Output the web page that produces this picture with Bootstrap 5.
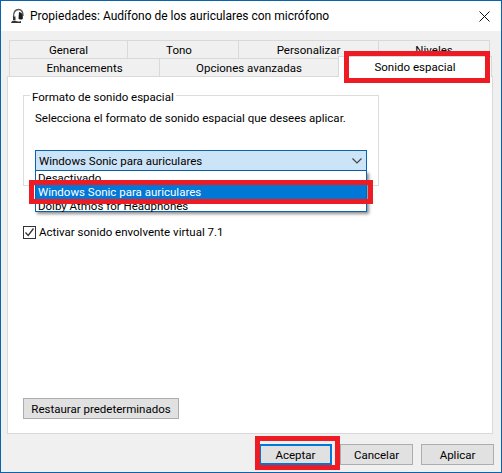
<!DOCTYPE html>
<html lang="es">
<head>
<meta charset="UTF-8">
<title>Propiedades</title>
<link href="https://cdn.jsdelivr.net/npm/bootstrap@5.3.0/dist/css/bootstrap.min.css" rel="stylesheet">
<style>
html, body { width: 502px; height: 473px; overflow: hidden; }
body { font-family: Roboto, "Liberation Sans", sans-serif; font-size: 11.5px; line-height: 16px; color: #000; background: #f0f0f0; }
.dlg { width: 502px; height: 473px; border: 1px solid #0a63ad; background: #f0f0f0; position: relative; }
.dlg-title { height: 30px; background: #fff; padding-left: 9px; font-size: 12px; }
.dlg-title svg { margin-right: 4px; flex: none; }
.dlg-close { margin-left: auto; margin-right: 11px !important; }
.tabs { margin: 9px 9px 0 8px; }
.tab-line { height: 18px; }
.tab-item { border: 1px solid #d9d9d9; border-bottom: 0; border-left-width: 0; background: #f0f0f0; text-align: center; line-height: 19px; }
.tab-item:first-child { border-left-width: 1px; }
.w-118 { width: 119px; } .w-111 { width: 111px; padding-right: 8px; } .w-140 { width: 140px; } .w-113 { width: 111px; }
.w-150 { width: 151px; } .w-179 { width: 179px; } .w-154 { width: 154px; }
.tab-on { background: #fff; height: 21px; margin-top: -2px; margin-bottom: -1px; position: relative; z-index: 1; line-height: 20px; border-left-width: 1px; margin-left: -1px; }
.pane { margin-left: 6px; width: 486px; height: 358px; background: #fff; border: 1px solid #d9d9d9; padding: 18px 15px 14px 15px; }
.grp { width: 356px; height: 91px; border: 1px solid #dcdcdc; padding: 14px 11px 0 11px; position: relative; }
.grp-name { position: absolute; left: 6px; top: -7px; background: #fff; padding: 0 2px; }
.sentence { margin-bottom: 24px; white-space: nowrap; }
.combo { height: 21px; border: 1px solid #0a63ad; background: #cce4f7; padding-left: 3px; }
.combo svg { margin-left: auto; margin-right: 4px; }
.combo-list { position: absolute; left: 11px; top: 75px; width: 332px; height: 41px; border: 1px solid #0a63ad; border-top: 0; background: #fff; box-shadow: 2px 2px 3px rgba(0,0,0,.45); z-index: 2; }
.combo-opt { height: 14px; line-height: 14px; padding-left: 2px; }
.combo-sel { background: #0078d7; color: #fff; }
.opt-row { margin-top: 38px; height: 16px; }
.opt-box { width: 13px; height: 13px; border: 1px solid #333; margin-right: 3px; background: #fff; flex: none; }
.opt-box svg { display: block; }
.win-btn { background: #e1e1e1; border: 1px solid #adadad; border-radius: 0; font-size: 11.5px; line-height: 16px; color: #000; padding: 1px 0; height: 21px; white-space: nowrap; }
.win-btn:hover { background: #e1e1e1; border-color: #adadad; color: #000; }
.btn-reset { width: 156px; margin-top: 158px; display: block; }
.foot { margin: 10px 7px 0 0; }
.foot .win-btn { width: 73px; margin-left: 8px; }
.foot .win-btn.btn-def { border: 2px solid #0078d7; padding: 0; }
.mark-red { position: absolute; border: 5px solid #ed1c24; z-index: 5; pointer-events: none; }
.mark-tab { left: 343px; top: 50px; width: 146px; height: 32px; }
.mark-opt { left: 28px; top: 179px; width: 344px; height: 24px; }
.mark-ok { left: 254px; top: 435px; width: 85px; height: 34px; }
</style>
</head>
<body>
<div class="dlg">
  <div class="dlg-title d-flex align-items-center">
    <svg width="16" height="16" viewBox="0 0 16 16"><path d="M3.500 9C3.500 4 5.500 1.500 8.500 1.500S13 4 13 8" fill="none" stroke="#555" stroke-width="1.300"/><path d="M9 4c2.500.2 3.800 2 3.800 4.500v2.500c-2 1-3.600.5-4.300-.5z" fill="#1c1c1c"/><path d="M3 8.500h2.500v3.500H3z" fill="#333"/><path d="M1 15c.6-2.400 3-3 4.500-2.200s3.300 1 5.500.2v2z" fill="#333"/></svg>
    <span>Propiedades: Audífono de los auriculares con micrófono</span>
    <svg class="dlg-close" width="11" height="11" viewBox="0 0 11 11"><path d="M.5.5l10 10M10.500.5l-10 10" stroke="#111" stroke-width="1"/></svg>
  </div>
  <div class="tabs">
    <div class="tab-line d-flex">
      <div class="tab-item w-118">General</div>
      <div class="tab-item w-111">Tono</div>
      <div class="tab-item w-140">Personalizar</div>
      <div class="tab-item w-113">Niveles</div>
    </div>
    <div class="tab-line d-flex">
      <div class="tab-item w-150">Enhancements</div>
      <div class="tab-item w-179">Opciones avanzadas</div>
      <div class="tab-item tab-on w-154">Sonido espacial</div>
    </div>
  </div>
  <div class="pane">
    <div class="grp">
      <div class="grp-name">Formato de sonido espacial</div>
      <div class="sentence">Selecciona el formato de sonido espacial que desees aplicar.</div>
      <div class="combo d-flex align-items-center">
        <span>Windows Sonic para auriculares</span>
        <svg width="10" height="6" viewBox="0 0 10 6"><path d="M.5.5L5 5 9.500.5" fill="none" stroke="#444" stroke-width="1.200"/></svg>
      </div>
      <div class="combo-list">
        <div class="combo-opt">Desactivado</div>
        <div class="combo-opt combo-sel">Windows Sonic para auriculares</div>
        <div class="combo-opt">Dolby Atmos for Headphones</div>
      </div>
    </div>
    <div class="opt-row d-flex align-items-center">
      <div class="opt-box"><svg width="11" height="11" viewBox="0 0 11 11"><path d="M1.500 5.500L4.200 8.500 9.500 1.500" fill="none" stroke="#333" stroke-width="1.300"/></svg></div>
      <span>Activar sonido envolvente virtual 7.1</span>
    </div>
    <button type="button" class="btn win-btn btn-reset">Restaurar predeterminados</button>
  </div>
  <div class="foot d-flex justify-content-end">
    <button type="button" class="btn win-btn btn-def">Aceptar</button>
    <button type="button" class="btn win-btn">Cancelar</button>
    <button type="button" class="btn win-btn">Aplicar</button>
  </div>
  <div class="mark-red mark-tab"></div>
  <div class="mark-red mark-opt"></div>
  <div class="mark-red mark-ok"></div>
</div>
<script src="https://cdn.jsdelivr.net/npm/bootstrap@5.3.0/dist/js/bootstrap.bundle.min.js"></script>
</body>
</html>
